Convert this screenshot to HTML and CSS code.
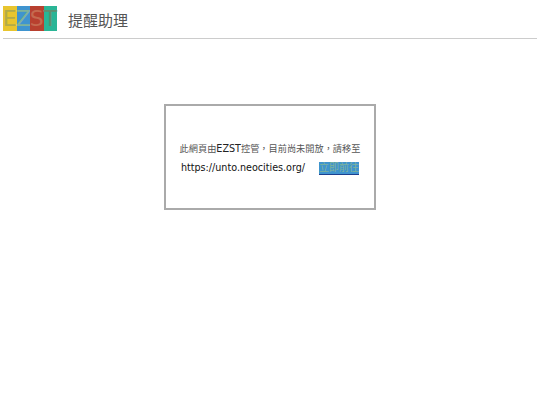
FILE: index.html
```html
<!DOCTYPE html>
<html lang="zh-Hant">
<head>
<meta charset="utf-8">
<title>提醒助理</title>
<link rel="stylesheet" href="styles.css">
</head>
<body>
<header class="header">
  <div class="logo">
    <span class="tile yellow"><span class="letter">E</span></span>
    <span class="tile blue"><span class="letter">Z</span></span>
    <span class="tile red"><span class="letter">S</span></span>
    <span class="tile teal"><span class="letter">T</span></span>
  </div>
  <h1 class="title">提醒助理</h1>
</header>
<main class="main">
  <section class="card">
    <p class="notice">此網頁由<span class="latin">EZST</span>控管，目前尚未開放，請移至</p>
    <p class="target">
      <span class="url">https://unto.neocities.org/</span>
      <a class="go" href="#">立即前往</a>
    </p>
  </section>
</main>
</body>
</html>
```
FILE: styles.css
```css
html, body {
  margin: 0;
  padding: 0;
  background: #fff;
}
body {
  font-family: "DejaVu Sans", "Noto Sans CJK SC", sans-serif;
  color: #222;
}
.header {
  display: flex;
  align-items: center;
  gap: 11px;
  height: 35px;
  margin: 3px 3px 0;
  width: 534px;
  border-bottom: 1px solid #ccc;
}
.logo {
  display: flex;
  height: 25px;
  width: 54px;
  margin-top: -4px;
}
.tile {
  flex: 1 1 0;
  min-width: 0;
  display: flex;
  align-items: center;
  justify-content: center;
}
.letter {
  font-family: "DejaVu Sans", sans-serif;
  font-size: 22px;
  line-height: 25px;
}
.yellow { background: #e8c52e; color: #b3ab48; }
.blue { background: #3f94cf; color: #7fb39a; }
.red { background: #b8402f; color: #c56a4f; }
.teal { background: #2ab596; color: #5f8f6f; }
.title {
  margin: -3px 0 0;
  font-size: 15px;
  font-weight: 400;
  color: #555;
  font-family: "Noto Sans CJK SC", sans-serif;
}
.main {
  display: flex;
  justify-content: center;
  padding-top: 65px;
}
.card {
  width: 212px;
  height: 106px;
  border: 2px solid #aaa;
  display: flex;
  flex-direction: column;
  align-items: center;
  padding-top: 36px;
  box-sizing: border-box;
}
.notice {
  margin: 0;
  font-size: 9.2px;
  line-height: 14px;
  white-space: nowrap;
  color: #555;
}
.latin {
  font-size: 9.6px;
  color: #222;
}
.target {
  margin: 5px 0 0;
  display: flex;
  align-items: center;
  gap: 14px;
  font-size: 9.6px;
  line-height: 14px;
  white-space: nowrap;
}
.url { color: #111; }
.go {
  background: #3f94cf;
  color: #7fb39a;
  text-decoration: none;
  border-bottom: 1px solid #1c3f8f;
  font-size: 10px;
  line-height: 12px;
}
```
